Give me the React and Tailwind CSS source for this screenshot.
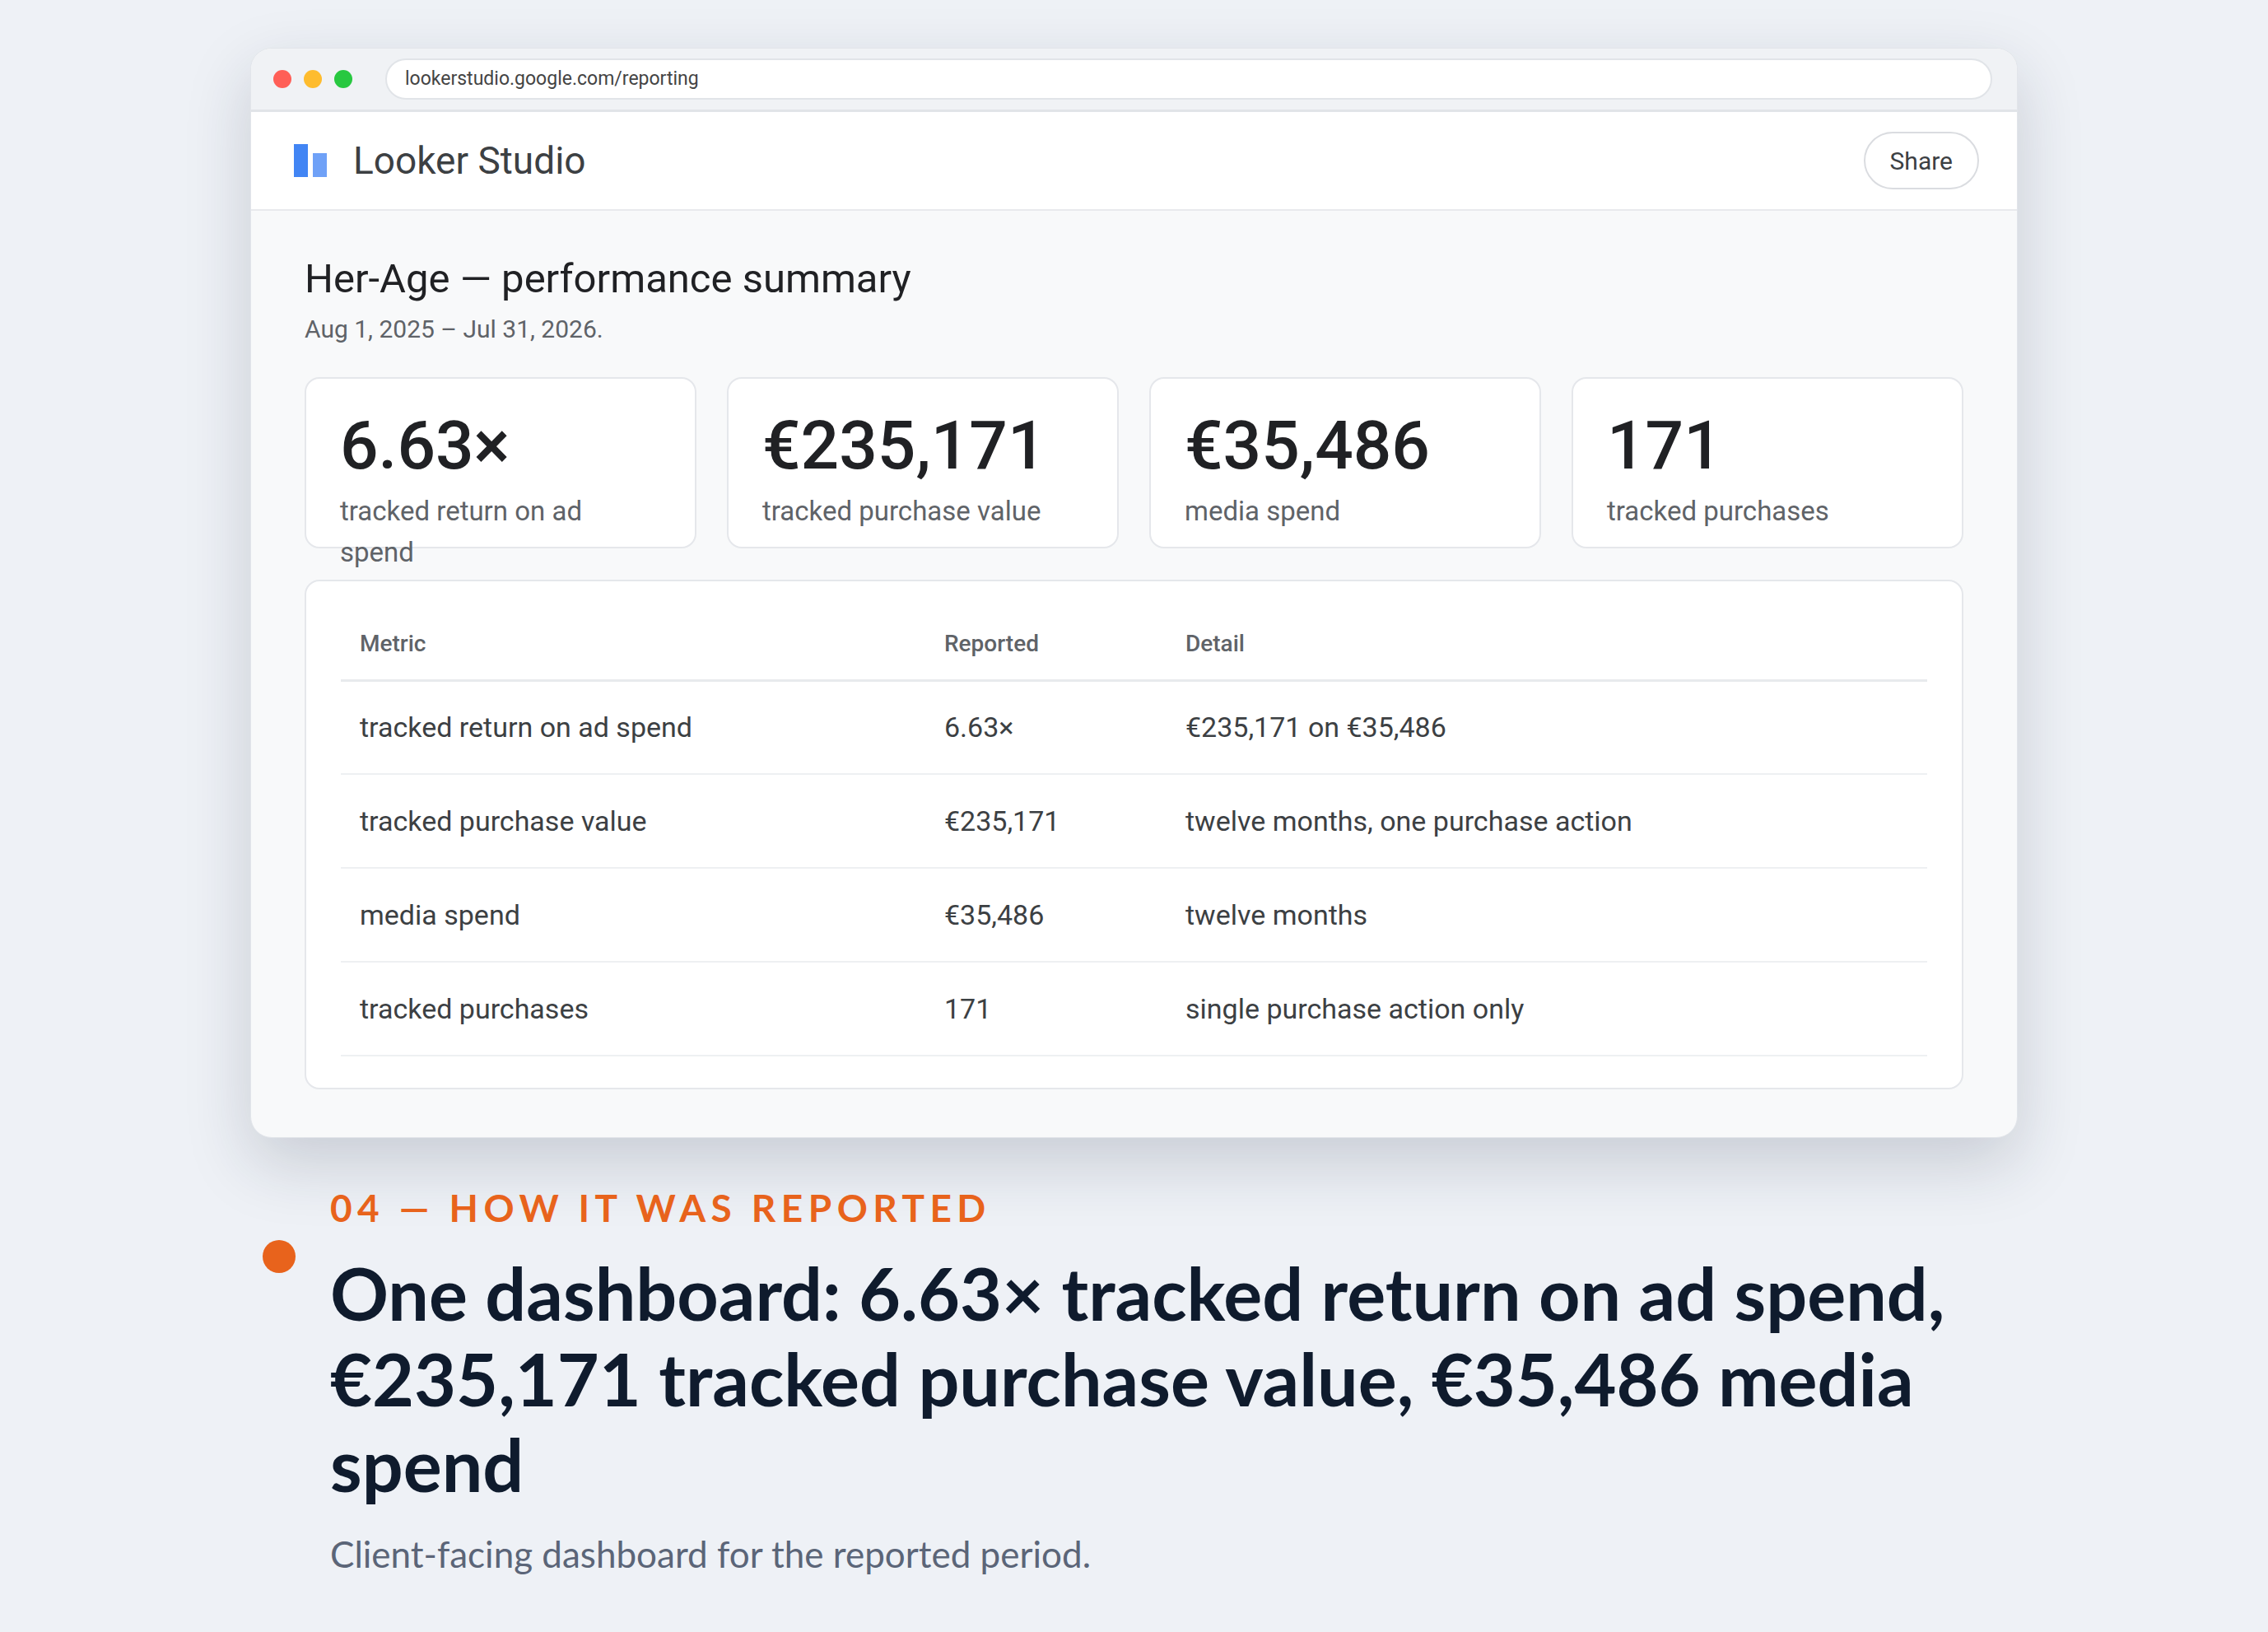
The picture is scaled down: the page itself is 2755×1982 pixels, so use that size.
import React from 'react';

const kpis = [
  { value: '6.63×', label: 'tracked return on ad spend' },
  { value: '€235,171', label: 'tracked purchase value' },
  { value: '€35,486', label: 'media spend' },
  { value: '171', label: 'tracked purchases' },
];

const rows = [
  ['tracked return on ad spend', '6.63×', '€235,171 on €35,486'],
  ['tracked purchase value', '€235,171', 'twelve months, one purchase action'],
  ['media spend', '€35,486', 'twelve months'],
  ['tracked purchases', '171', 'single purchase action only'],
];

export default function App() {
  return (
    <div className="min-h-screen w-[2755px] h-[1982px] bg-[#eef1f6] pt-[58px] font-[family-name:Roboto,sans-serif]">
      {/* browser window */}
      <div className="ml-[304px] w-[2147px] rounded-[26px] bg-[#f8f9fa] overflow-hidden shadow-[0_30px_80px_rgba(30,41,59,0.18)] border border-[#e2e5ea]">
        <div className="h-[77px] bg-[#f0f2f5] border-b-[3px] border-[#e1e4e8] flex items-center pl-[27px] pr-[30px]">
          <div className="flex gap-[15px]">
            <span className="w-[22px] h-[22px] rounded-full bg-[#ff5f57]" />
            <span className="w-[22px] h-[22px] rounded-full bg-[#febc2e]" />
            <span className="w-[22px] h-[22px] rounded-full bg-[#28c840]" />
          </div>
          <div className="ml-[40px] flex-1 h-[50px] rounded-full bg-white border-2 border-[#e1e4e8] flex items-center pl-[22px] text-[23px] text-[#444]">
            lookerstudio.google.com/reporting
          </div>
        </div>
        <div className="h-[120px] bg-white border-b-2 border-[#e8eaed] flex items-center justify-between pl-[52px] pr-[46px]">
          <div className="flex items-center gap-[28px]">
            <svg width="44" height="44" viewBox="0 0 44 44">
              <rect x="0" y="2" width="17" height="40" fill="#4285f4" />
              <rect x="23" y="13" width="17" height="29" fill="#6fa1f7" />
            </svg>
            <span className="text-[46px] text-[#3c4043]">Looker Studio</span>
          </div>
          <button className="h-[70px] px-[30px] rounded-full border-2 border-[#dadce0] bg-white text-[30px] text-[#3c4043]">Share</button>
        </div>
        <div className="px-[65px] pt-[52px] pb-[58px]">
          <h1 className="text-[49px] text-[#202124] leading-tight">Her-Age — performance summary</h1>
          <p className="mt-[8px] text-[30px] text-[#5f6368]">Aug 1, 2025 – Jul 31, 2026.</p>
          <div className="mt-[36px] grid grid-cols-4 gap-[37px]">
            {kpis.map((k) => (
              <div key={k.label} className="h-[208px] bg-white rounded-[18px] border-2 border-[#e5e7eb] px-[41px] pt-[40px]">
                <div className="text-[82px] font-medium text-[#202124] leading-none">{k.value}</div>
                <div className="mt-[14px] text-[33px] text-[#5f6368]">{k.label}</div>
              </div>
            ))}
          </div>
          <div className="mt-[38px] bg-white rounded-[18px] border-2 border-[#e5e7eb] px-[42px] pb-[38px]">
            <table className="w-full text-left border-collapse">
              <thead>
                <tr className="h-[120px] border-b-[3px] border-[#e8eaed] align-middle">
                  <th className="w-[710px] pl-[23px] pt-[32px] text-[28px] font-medium text-[#5f6368]">Metric</th>
                  <th className="w-[293px] pl-[23px] pt-[32px] text-[28px] font-medium text-[#5f6368]">Reported</th>
                  <th className="pl-[23px] pt-[32px] text-[28px] font-medium text-[#5f6368]">Detail</th>
                </tr>
              </thead>
              <tbody>
                {rows.map((r) => (
                  <tr key={r[0]} className="h-[114px] border-b-2 border-[#eef0f2] text-[34px] text-[#3c4043]">
                    <td className="pl-[23px]">{r[0]}</td>
                    <td className="pl-[23px]">{r[1]}</td>
                    <td className="pl-[23px]">{r[2]}</td>
                  </tr>
                ))}
              </tbody>
            </table>
          </div>
        </div>
      </div>

      {/* caption */}
      <div className="ml-[319px] mt-[62px] flex gap-[42px] font-[family-name:Lato,sans-serif]">
        <span className="mt-[62px] w-[40px] h-[40px] shrink-0 rounded-full bg-[#e8631c]" />
        <div>
          <div className="text-[46px] font-bold tracking-[0.14em] text-[#e8631c] leading-none">04 — HOW IT WAS REPORTED</div>
          <h2 className="mt-[28px] w-[2100px] text-[88px] font-bold leading-[104px] text-[#0f1b2d]">
            One dashboard: 6.63× tracked return on ad spend, €235,171 tracked purchase value, €35,486 media spend
          </h2>
          <p className="mt-[24px] text-[44px] text-[#5b6578]">Client-facing dashboard for the reported period.</p>
        </div>
      </div>
    </div>
  );
}
